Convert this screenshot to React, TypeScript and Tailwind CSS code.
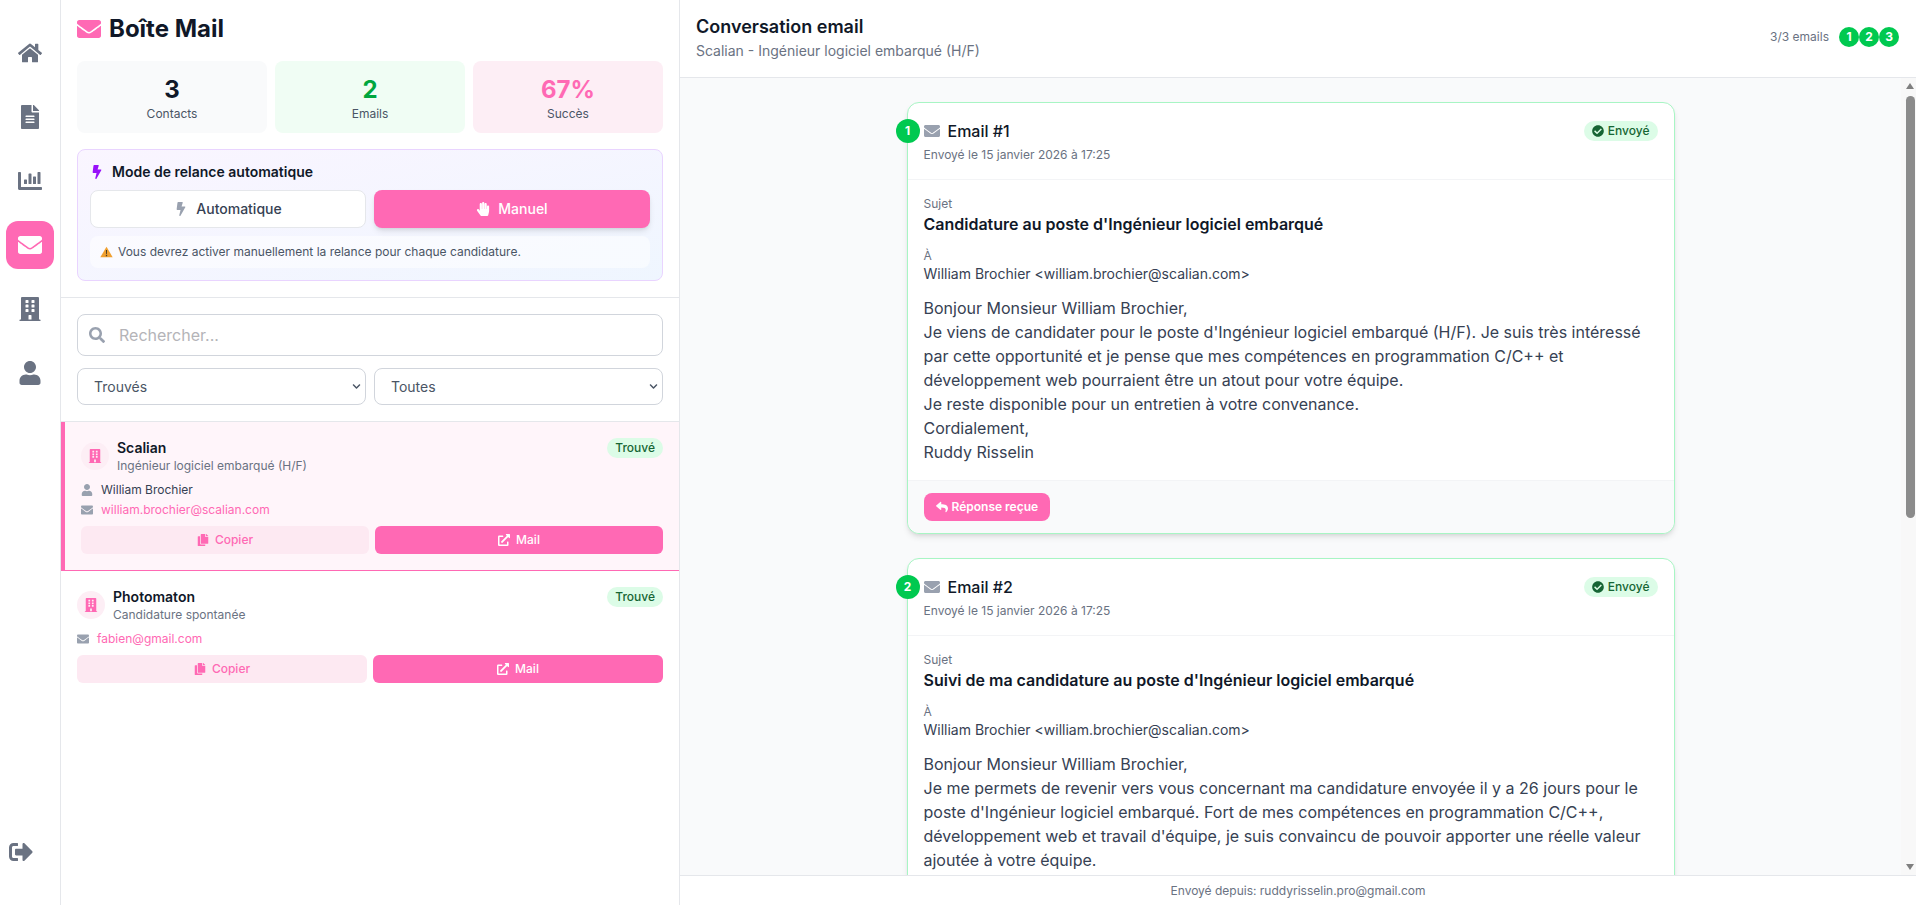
import {
  FaBolt,
  FaBuilding,
  FaChartBar,
  FaCheckCircle,
  FaChevronDown,
  FaCopy,
  FaEnvelope,
  FaExternalLinkAlt,
  FaFileAlt,
  FaHandPaper,
  FaHome,
  FaReply,
  FaSearch,
  FaSignOutAlt,
  FaUser,
} from 'react-icons/fa'
import type { ReactNode } from 'react'

const PINK = 'bg-[#ff69b4]'

function NavItem({ children, active }: { children: ReactNode; active?: boolean }) {
  return (
    <div
      className={`flex h-12 w-12 items-center justify-center rounded-xl text-2xl ${
        active ? `${PINK} text-white` : 'text-gray-500'
      }`}
    >
      {children}
    </div>
  )
}

function Sidebar() {
  return (
    <aside className="flex h-full w-[61px] shrink-0 flex-col items-center justify-between border-r border-gray-200 bg-white pt-[29px] pb-[29px]">
      <div className="flex flex-col items-center gap-4">
        <NavItem><FaHome /></NavItem>
        <NavItem><FaFileAlt /></NavItem>
        <NavItem><FaChartBar /></NavItem>
        <NavItem active><FaEnvelope /></NavItem>
        <NavItem><FaBuilding /></NavItem>
        <NavItem><FaUser /></NavItem>
      </div>
      <div className="flex h-12 items-center self-start pl-[9px] text-2xl text-gray-500">
        <FaSignOutAlt />
      </div>
    </aside>
  )
}

function Stat({ value, label, box, color }: { value: string; label: string; box: string; color: string }) {
  return (
    <div className={`flex h-[72px] flex-col items-center justify-center rounded-lg pt-px ${box}`}>
      <div className={`text-2xl leading-8 font-bold ${color}`}>{value}</div>
      <div className="text-xs leading-4 text-gray-600">{label}</div>
    </div>
  )
}

function WarningIcon() {
  return (
    <svg viewBox="0 0 16 14" className="h-[12px] w-[13px] shrink-0">
      <path d="M8 0.5 15.6 13.5H0.4Z" fill="#f0a030" />
      <path d="M7.3 4.5h1.4l-.2 5h-1zM7.2 10.5h1.6v1.6H7.2z" fill="#4b3a20" />
    </svg>
  )
}

function ModeBox() {
  return (
    <div className="mt-4 rounded-lg border border-purple-200 bg-gradient-to-br from-purple-50 to-blue-50 p-3">
      <div className="flex h-5 items-center gap-2 text-sm font-semibold text-gray-900">
        <FaBolt className="text-[#9810fa]" />
        Mode de relance automatique
      </div>
      <div className="mt-2 grid grid-cols-2 gap-2">
        <div className="flex h-[38px] items-center justify-center gap-2 rounded-lg border border-gray-200 bg-white text-sm font-medium text-gray-700">
          <FaBolt className="text-gray-400" />
          Automatique
        </div>
        <div className={`flex h-[38px] items-center justify-center gap-2 rounded-lg text-sm font-medium text-white shadow-md ${PINK}`}>
          <FaHandPaper />
          Manuel
        </div>
      </div>
      <div className="mt-2 flex h-8 items-center gap-[5px] rounded-lg bg-white/50 px-2.5 text-xs text-gray-600">
        <WarningIcon />
        Vous devrez activer manuellement la relance pour chaque candidature.
      </div>
    </div>
  )
}

function Filter({ label }: { label: string }) {
  return (
    <div className="relative">
      <select className="h-[37px] w-full appearance-none rounded-lg border border-gray-300 bg-white pl-4 text-sm text-gray-600 outline-none">
        <option>{label}</option>
      </select>
      <FaChevronDown className="pointer-events-none absolute top-[14px] right-[5px] text-[9px] text-gray-600" />
    </div>
  )
}

function Contact({
  company,
  job,
  person,
  email,
  active,
}: {
  company: string
  job: string
  person?: string
  email: string
  active?: boolean
}) {
  return (
    <div className={active ? 'border-b border-l-4 border-[#ff69b4] bg-[#fff5fa] p-4' : 'p-4'}>
      <div className="flex items-start justify-between">
        <div className="flex items-center gap-2">
          <div className="flex h-7 w-7 items-center justify-center rounded-full bg-[#fdeef5] text-sm text-[#ff69b4]">
            <FaBuilding />
          </div>
          <div>
            <div className="text-sm leading-5 font-semibold text-gray-900">{company}</div>
            <div className="text-xs leading-4 text-gray-500">{job}</div>
          </div>
        </div>
        <span className="flex h-5 items-center rounded-full bg-[#dcfce7] px-2 text-xs font-medium text-[#166534]">
          Trouvé
        </span>
      </div>
      <div className="mt-2 flex flex-col gap-1 text-xs leading-4">
        {person && (
          <div className="flex items-center gap-2 text-gray-700">
            <FaUser className="text-gray-400" />
            {person}
          </div>
        )}
        <div className="flex items-center gap-2 text-[#ff69b4]">
          <FaEnvelope className="text-gray-400" />
          {email}
        </div>
      </div>
      <div className="mt-2 grid grid-cols-2 gap-1.5">
        <div className="flex h-7 items-center justify-center gap-1.5 rounded-md bg-[#fde9f2] text-xs font-medium text-[#ff69b4]">
          <FaCopy />
          Copier
        </div>
        <div className={`flex h-7 items-center justify-center gap-1.5 rounded-md text-xs font-medium text-white ${PINK}`}>
          <FaExternalLinkAlt />
          Mail
        </div>
      </div>
    </div>
  )
}

function ListPanel() {
  return (
    <section className="flex h-full w-[619px] shrink-0 flex-col overflow-hidden border-r border-gray-200 bg-white">
      <div className="border-b border-gray-200 p-4">
        <h1 className="flex h-6 translate-y-px items-center gap-2 text-2xl font-bold text-gray-900">
          <FaEnvelope className="text-[#ff69b4]" />
          Boîte Mail
        </h1>
        <div className="mt-[21px] grid grid-cols-3 gap-2">
          <Stat value="3" label="Contacts" box="bg-gray-50" color="text-gray-900" />
          <Stat value="2" label="Emails" box="bg-green-50" color="text-[#00a63e]" />
          <Stat value="67%" label="Succès" box="bg-[#fdeef5]" color="text-[#ff69b4]" />
        </div>
        <ModeBox />
      </div>
      <div className="border-b border-gray-200 p-4">
        <div className="relative">
          <FaSearch className="absolute top-[13px] left-3 text-base text-gray-400" />
          <input
            readOnly
            placeholder="Rechercher..."
            className="h-[42px] w-full rounded-lg border border-gray-300 pl-[41px] text-base text-gray-700 outline-none placeholder:text-[#b4b4b8]"
          />
        </div>
        <div className="mt-3 grid grid-cols-2 gap-2">
          <Filter label="Trouvés" />
          <Filter label="Toutes" />
        </div>
      </div>
      <Contact
        active
        company="Scalian"
        job="Ingénieur logiciel embarqué (H/F)"
        person="William Brochier"
        email="william.brochier@scalian.com"
      />
      <Contact company="Photomaton" job="Candidature spontanée" email="fabien@gmail.com" />
    </section>
  )
}

function Step({ n }: { n: number }) {
  return (
    <span className="flex h-5 w-5 items-center justify-center rounded-full bg-[#00c950] text-xs font-bold text-white">
      {n}
    </span>
  )
}

function EmailCard({ n, subject, lines }: { n: number; subject: string; lines: string[] }) {
  return (
    <article className="relative rounded-xl border border-[#a8f5c4] bg-white shadow-md">
      <span className="absolute top-4 -left-3 flex h-6 w-6 items-center justify-center rounded-full bg-[#00c950] text-xs font-bold text-white">
        {n}
      </span>
      <header className="border-b border-gray-100 p-4">
        <div className="flex h-6 items-center justify-between">
          <div className="flex items-center gap-2 text-base font-medium text-gray-900">
            <FaEnvelope className="text-gray-400" />
            Email #{n}
          </div>
          <span className="flex h-5 items-center gap-1 rounded-full bg-[#dcfce7] px-2 text-xs font-medium text-[#166534]">
            <FaCheckCircle />
            Envoyé
          </span>
        </div>
        <div className="mt-1 text-xs leading-4 text-gray-500">Envoyé le 15 janvier 2026 à 17:25</div>
      </header>
      <div className="p-4">
        <div className="text-xs leading-4 text-gray-500">Sujet</div>
        <div className="text-base leading-6 font-semibold text-gray-900">{subject}</div>
        <div className="mt-3 text-xs leading-4 text-gray-500">À</div>
        <div className="text-sm leading-5 text-gray-700">William Brochier &lt;william.brochier@scalian.com&gt;</div>
        <div className="mt-3 text-base leading-6 text-gray-700">
          {lines.map(line => (
            <div key={line}>{line}</div>
          ))}
        </div>
      </div>
      <footer className="rounded-b-xl border-t border-gray-100 bg-gray-50 px-4 py-3">
        <span className={`inline-flex h-7 items-center gap-1 rounded-lg px-3 text-xs font-semibold text-white ${PINK}`}>
          <FaReply />
          Réponse reçue
        </span>
      </footer>
    </article>
  )
}

// headless chrome hides real scrollbars, so the rail is drawn
function ScrollRail() {
  return (
    <div className="flex w-[15px] shrink-0 flex-col items-center bg-[#f8f8f8] pt-[5px] pr-px pb-[5px] pl-1">
      <span className="h-0 w-0 border-x-[4.5px] border-b-[6px] border-x-transparent border-b-[#7f7f7f]" />
      <span className="mt-[7px] h-[422px] w-[9px] rounded-full bg-[#8b8b8b]" />
      <span className="mt-auto h-0 w-0 border-x-[4.5px] border-t-[6px] border-x-transparent border-t-[#7f7f7f]" />
    </div>
  )
}

function Conversation() {
  return (
    <main className="flex h-full min-w-0 flex-1 flex-col bg-white">
      <div className="flex h-[78px] shrink-0 items-center justify-between border-b border-gray-200 pr-[17px] pb-[3px] pl-4">
        <div>
          <h2 className="text-lg leading-7 font-semibold text-gray-900">Conversation email</h2>
          <p className="text-sm leading-5 text-gray-500">Scalian - Ingénieur logiciel embarqué (H/F)</p>
        </div>
        <div className="flex items-center gap-[10px]">
          <span className="text-xs text-gray-500">3/3 emails</span>
          <div className="flex">
            <Step n={1} />
            <Step n={2} />
            <Step n={3} />
          </div>
        </div>
      </div>
      <div className="flex min-h-0 flex-1">
        <div className="h-full min-w-0 flex-1 overflow-hidden bg-gray-50 p-6">
          <div className="mx-auto flex max-w-3xl flex-col gap-6">
            <EmailCard
              n={1}
              subject="Candidature au poste d'Ingénieur logiciel embarqué"
              lines={[
                'Bonjour Monsieur William Brochier,',
                "Je viens de candidater pour le poste d'Ingénieur logiciel embarqué (H/F). Je suis très intéressé par cette opportunité et je pense que mes compétences en programmation C/C++ et développement web pourraient être un atout pour votre équipe.",
                'Je reste disponible pour un entretien à votre convenance.',
                'Cordialement,',
                'Ruddy Risselin',
              ]}
            />
            <EmailCard
              n={2}
              subject="Suivi de ma candidature au poste d'Ingénieur logiciel embarqué"
              lines={[
                'Bonjour Monsieur William Brochier,',
                "Je me permets de revenir vers vous concernant ma candidature envoyée il y a 26 jours pour le poste d'Ingénieur logiciel embarqué. Fort de mes compétences en programmation C/C++, développement web et travail d'équipe, je suis convaincu de pouvoir apporter une réelle valeur ajoutée à votre équipe.",
              ]}
            />
          </div>
        </div>
        <ScrollRail />
      </div>
      <div className="flex h-[30px] shrink-0 items-center justify-center border-t border-gray-200 text-xs text-gray-500">
        Envoyé depuis: ruddyrisselin.pro@gmail.com
      </div>
    </main>
  )
}

export default function App() {
  return (
    <div className="flex h-screen w-full overflow-hidden bg-white font-['Inter',sans-serif]">
      <Sidebar />
      <ListPanel />
      <Conversation />
    </div>
  )
}
